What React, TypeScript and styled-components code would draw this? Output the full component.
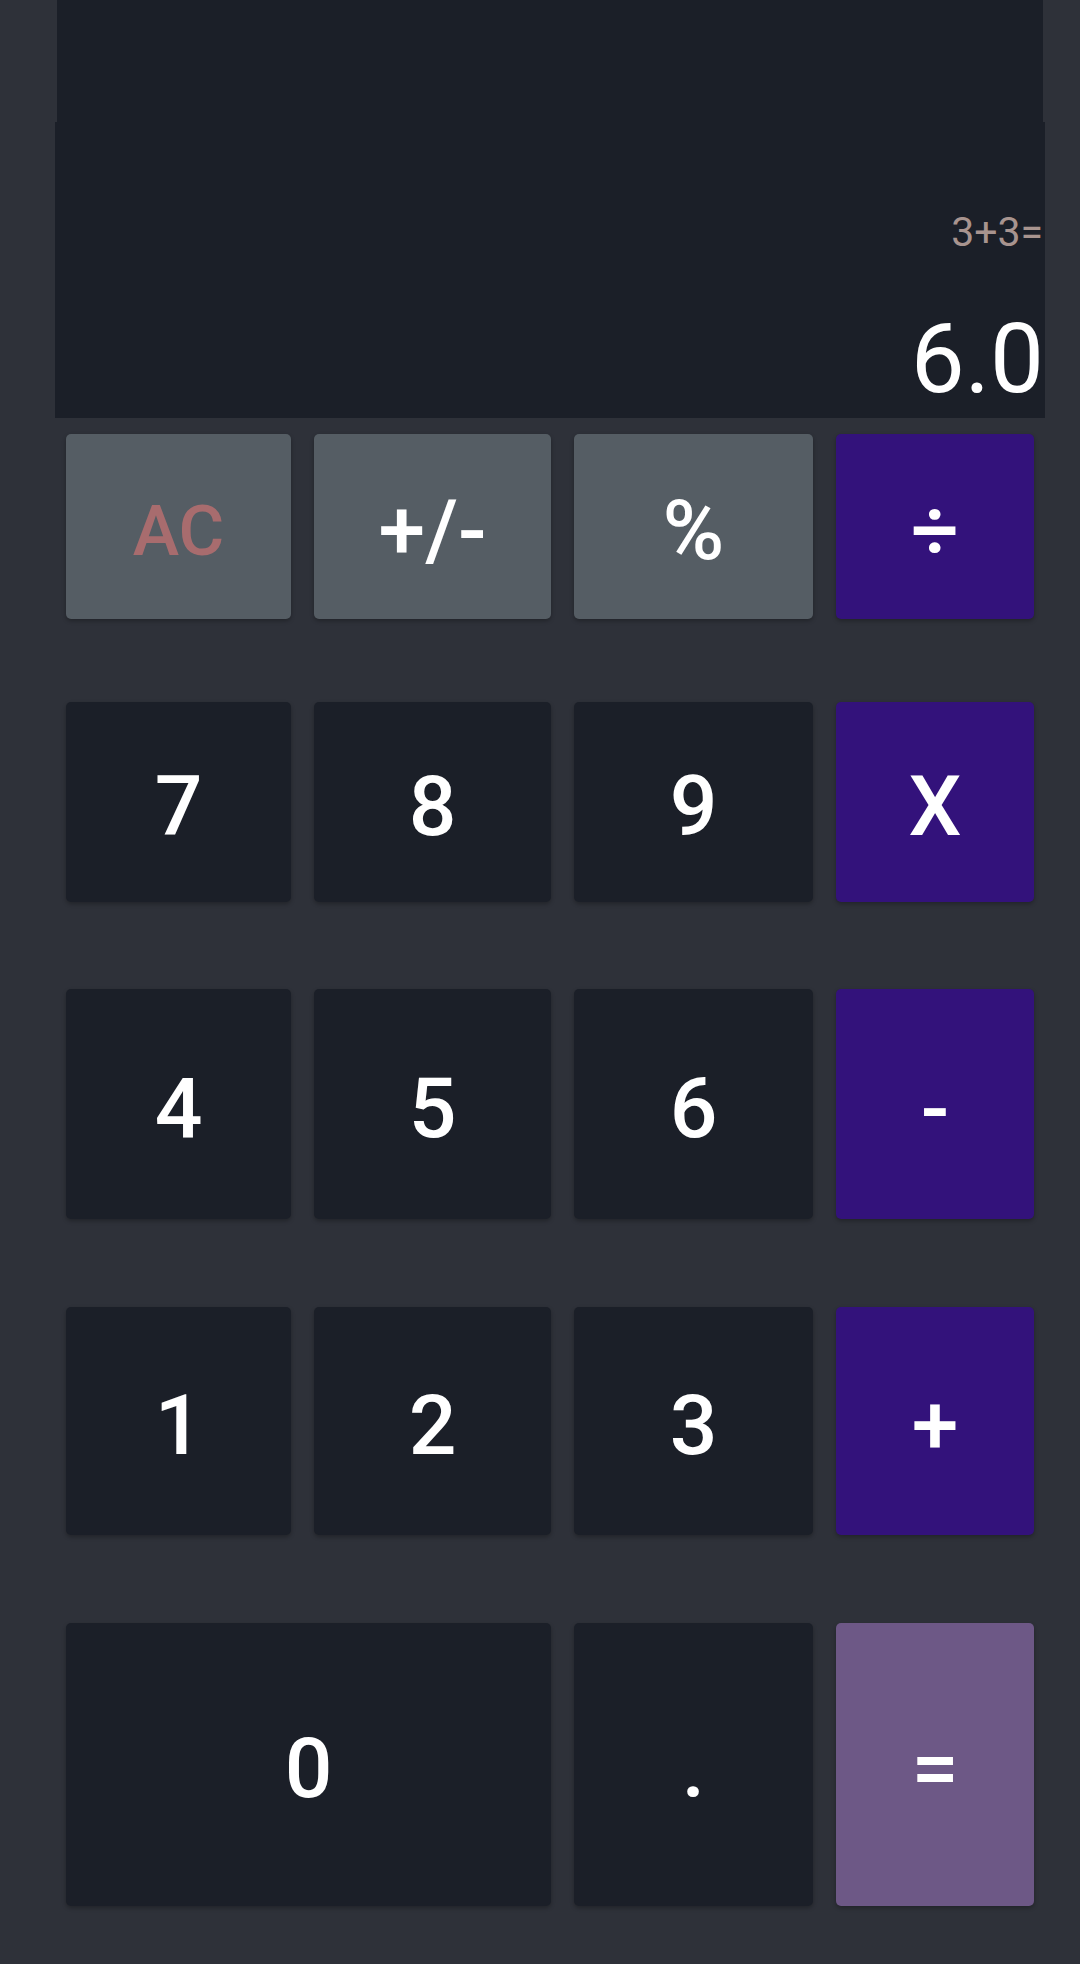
import React from "react";
import styled, { createGlobalStyle } from "styled-components";

const GlobalStyle = createGlobalStyle`
  html, body {
    margin: 0;
    padding: 0;
    background: #2e3139;
  }
  body {
    font-family: Roboto, "Noto Sans", "Liberation Sans", sans-serif;
  }
  * { box-sizing: border-box; }
`;

const Page = styled.div`
  width: 1080px;
  height: 1964px;
  background: #2e3139;
  display: flex;
  flex-direction: column;
  overflow: hidden;
`;

const TopStrip = styled.div`
  height: 122px;
  margin: 0 37px 0 57px;
  background: #1b1f28;
`;

const Screen = styled.div`
  height: 296px;
  margin: 0 35px 0 55px;
  background: #1b1f28;
  display: flex;
  flex-direction: column;
  justify-content: flex-end;
  align-items: flex-end;
  padding: 0 1px 3px 0;
`;

const Expression = styled.div`
  font-size: 41px;
  line-height: 48px;
  color: #a8948f;
  font-weight: 400;
  margin-bottom: 47px;
  padding-right: 1px;
`;

const Result = styled.div`
  font-size: 96px;
  line-height: 112px;
  color: #ffffff;
  font-weight: 400;
`;

const Keypad = styled.div`
  display: flex;
  flex-direction: column;
  padding: 0 0 0 66px;
`;

const KeyRow = styled.div<{ $height: number; $gap: number }>`
  display: grid;
  grid-template-columns: 225px 237px 239px 198px;
  column-gap: 23px;
  height: ${(p) => p.$height}px;
  margin-top: ${(p) => p.$gap}px;
`;

type Tone = "gray" | "dark" | "purple" | "equals";

const toneBg: Record<Tone, string> = {
  gray: "#555d64",
  dark: "#1b1f28",
  purple: "#33127b",
  equals: "#6d5886",
};

const Key = styled.button<{ $tone: Tone; $span?: number; $color?: string; $size?: number }>`
  grid-column: span ${(p) => p.$span ?? 1};
  border: none;
  border-radius: 5px;
  background: ${(p) => toneBg[p.$tone]};
  color: ${(p) => p.$color ?? "#ffffff"};
  font-family: Roboto, "Noto Sans", "Liberation Sans", sans-serif;
  font-weight: 500;
  font-size: ${(p) => p.$size ?? 84}px;
  line-height: normal;
  display: flex;
  align-items: center;
  justify-content: center;
  padding: 8px 0 0 0;
  margin: 0;
  box-shadow: 0 2px 4px rgba(0, 0, 0, 0.28);
  cursor: pointer;
`;

type KeyDef = { label: string; tone: Tone; span?: number; color?: string; size?: number };

const rows: { height: number; gap: number; keys: KeyDef[] }[] = [
  {
    height: 185,
    gap: 16,
    keys: [
      { label: "AC", tone: "gray", color: "#a86c6e", size: 70 },
      { label: "+/-", tone: "gray" },
      { label: "%", tone: "gray" },
      { label: "÷", tone: "purple" },
    ],
  },
  {
    height: 200,
    gap: 83,
    keys: [
      { label: "7", tone: "dark" },
      { label: "8", tone: "dark" },
      { label: "9", tone: "dark" },
      { label: "X", tone: "purple" },
    ],
  },
  {
    height: 230,
    gap: 87,
    keys: [
      { label: "4", tone: "dark" },
      { label: "5", tone: "dark" },
      { label: "6", tone: "dark" },
      { label: "-", tone: "purple" },
    ],
  },
  {
    height: 228,
    gap: 88,
    keys: [
      { label: "1", tone: "dark" },
      { label: "2", tone: "dark" },
      { label: "3", tone: "dark" },
      { label: "+", tone: "purple" },
    ],
  },
  {
    height: 283,
    gap: 88,
    keys: [
      { label: "0", tone: "dark", span: 2 },
      { label: ".", tone: "dark" },
      { label: "=", tone: "equals" },
    ],
  },
];

export default function App() {
  return (
    <Page>
      <GlobalStyle />
      <TopStrip />
      <Screen>
        <Expression>3+3=</Expression>
        <Result>6.0</Result>
      </Screen>
      <Keypad>
        {rows.map((row, i) => (
          <KeyRow key={i} $height={row.height} $gap={row.gap}>
            {row.keys.map((k) => (
              <Key key={k.label} $tone={k.tone} $span={k.span} $color={k.color} $size={k.size}>
                {k.label}
              </Key>
            ))}
          </KeyRow>
        ))}
      </Keypad>
    </Page>
  );
}
